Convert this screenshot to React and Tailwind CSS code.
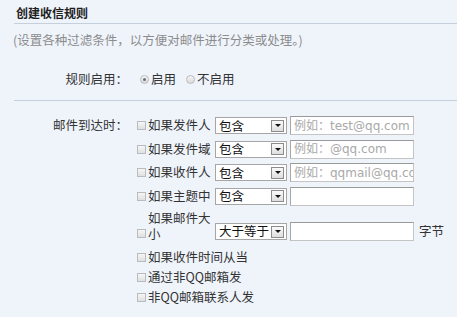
import React from 'react';

const font = { fontFamily: '"Noto Sans CJK SC", "Microsoft YaHei", sans-serif' };
const latin = { fontFamily: '"DejaVu Sans", "Noto Sans CJK SC", sans-serif' };

function Checkbox() {
    return <span className="inline-block h-[9px] w-[9px] shrink-0 border border-[#b8bcc1] bg-gradient-to-b from-[#f6f6f6] to-[#e0e0e0]" />;
}

function Radio({ checked }) {
    return (
        <span className="flex h-[9px] w-[9px] shrink-0 items-center justify-center rounded-full border border-[#b8bcc1] bg-gradient-to-b from-[#f6f6f6] to-[#dadada]">
            {checked && <span className="h-[3px] w-[3px] rounded-full bg-[#6e6e6e]" />}
        </span>
    );
}

function Select({ value }) {
    return (
        <div className="flex h-[17px] w-[72px] shrink-0 items-center justify-between border border-[#a6a6a6] bg-white pl-[3px] pr-[2px]">
            <span className="text-[12.5px] leading-none text-[#111]">{value}</span>
            <span className="flex h-[12px] w-[13px] items-center justify-center border border-[#8c8c8c] bg-gradient-to-b from-[#fafafa] to-[#dedede]">
                <span className="h-0 w-0 border-x-[3px] border-t-[3px] border-x-transparent border-t-[#111]" />
            </span>
        </div>
    );
}

function TextInput({ placeholder }) {
    return (
        <div className="ml-[3px] flex h-[19px] w-[124px] shrink-0 items-center overflow-hidden border border-[#c4c4c4] border-t-[#9a9a9a] border-l-[#a8a8a8] bg-white pl-[3px]">
            <span className="whitespace-nowrap text-[12px] leading-none text-[#a9a9a9]" style={latin}>{placeholder}</span>
        </div>
    );
}

function RuleRow({ label, placeholder }) {
    return (
        <div className="flex h-[23.5px] items-center">
            <Checkbox />
            <span className="ml-[2px] w-[67px] whitespace-nowrap text-[12.5px] text-[#333]">{label}</span>
            <Select value="包含" />
            <TextInput placeholder={placeholder} />
        </div>
    );
}

function PlainRow({ label }) {
    return (
        <div className="flex h-[20px] items-center">
            <Checkbox />
            <span className="ml-[2px] whitespace-nowrap text-[12.5px] text-[#333]">{label}</span>
        </div>
    );
}

export default function App() {
    return (
        <div className="h-[317px] w-[457px] overflow-hidden bg-[#eff4fb]" style={font}>
            <div className="ml-[14px] flex h-[24px] items-center border-b border-[#c6d0dc] pl-[2px] pt-[2px]">
                <h1 className="text-[12px] font-bold text-[#1e1e1e]">创建收信规则</h1>
            </div>

            <p className="flex h-[32px] items-center pl-[13px] text-[12.5px] text-[#8c8c8c]">
                (设置各种过滤条件，以方便对邮件进行分类或处理。)
            </p>

            <div className="ml-[14px] border-b border-[#c6d0dc] pb-[10px] pt-[12px]">
                <div className="flex h-[22px] items-center">
                    <span className="w-[114px] text-right text-[12.5px] text-[#333]">规则启用：</span>
                    <div className="ml-[12px] flex items-center">
                        <Radio checked />
                        <span className="ml-[2px] text-[12.5px] text-[#333]">启用</span>
                        <span className="ml-[10px]" />
                        <Radio />
                        <span className="ml-[2px] text-[12.5px] text-[#333]">不启用</span>
                    </div>
                </div>
            </div>

            <div className="flex pt-[13px]">
                <div className="flex h-[23.5px] w-[128px] items-center justify-end">
                    <span className="text-[12.5px] text-[#333]">邮件到达时：</span>
                </div>
                <div className="ml-[9px] flex flex-col">
                    <RuleRow label="如果发件人" placeholder="例如：test@qq.com" />
                    <RuleRow label="如果发件域" placeholder="例如：@qq.com" />
                    <RuleRow label="如果收件人" placeholder="例如：qqmail@qq.com" />
                    <RuleRow label="如果主题中" placeholder="" />

                    <div className="flex items-end pt-[1.5px]">
                        <div className="w-[78px] text-[12.5px] leading-[16px] text-[#333]">
                            <div className="whitespace-nowrap pl-[11px]">如果邮件大</div>
                            <div className="flex items-center">
                                <Checkbox />
                                <span className="ml-[2px]">小</span>
                            </div>
                        </div>
                        <div className="mb-[0.5px] flex items-center">
                            <Select value="大于等于" />
                            <TextInput placeholder="" />
                            <span className="ml-[5px] text-[12.5px] text-[#333]">字节</span>
                        </div>
                    </div>

                    <div className="mt-[6px] flex flex-col">
                        <PlainRow label="如果收件时间从当" />
                        <PlainRow label="通过非QQ邮箱发" />
                        <PlainRow label="非QQ邮箱联系人发" />
                    </div>
                </div>
            </div>
        </div>
    );
}
